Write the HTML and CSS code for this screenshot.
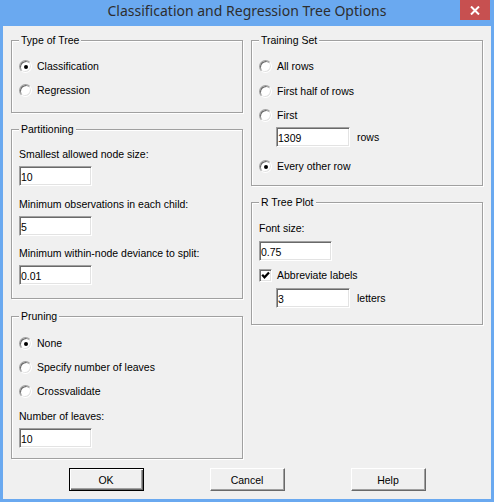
FILE: index.html
```html
<!DOCTYPE html>
<html>
<head>
<meta charset="utf-8">
<link rel="stylesheet" href="styles.css">
</head>
<body>
<div class="window">
  <div class="titlebar">
    <span></span>
    <span class="title">Classification and Regression Tree Options</span>
    <span class="close"><svg width="10" height="9" viewBox="0 0 10 9"><path d="M1 0.5 L9 8.5 M9 0.5 L1 8.5" stroke="#fff" stroke-width="2"/></svg></span>
  </div>
  <div class="client">
    <div class="columns">
      <div class="col">
        <div class="group g-type">
          <div class="legend">Type of Tree</div>
          <div class="row r-first"><span class="radio checked"></span>Classification</div>
          <div class="row r-next"><span class="radio"></span>Regression</div>
        </div>
        <div class="group g-part">
          <div class="legend">Partitioning</div>
          <div class="label l-first">Smallest allowed node size:</div>
          <input class="edit" value="10">
          <div class="label l-next">Minimum observations in each child:</div>
          <input class="edit" value="5">
          <div class="label l-next2">Minimum within-node deviance to split:</div>
          <input class="edit" value="0.01">
        </div>
        <div class="group g-prune">
          <div class="legend">Pruning</div>
          <div class="row r-none"><span class="radio checked"></span>None</div>
          <div class="row r-next"><span class="radio"></span>Specify number of leaves</div>
          <div class="row r-next"><span class="radio"></span>Crossvalidate</div>
          <div class="label l-next">Number of leaves:</div>
          <input class="edit" value="10">
        </div>
      </div>
      <div class="col">
        <div class="group g-train">
          <div class="legend">Training Set</div>
          <div class="row r-first"><span class="radio"></span>All rows</div>
          <div class="row r-half"><span class="radio"></span>First half of rows</div>
          <div class="row r-next"><span class="radio"></span>First</div>
          <div class="editrow"><input class="edit wide" value="1309"><span class="unit">rows</span></div>
          <div class="row r-every"><span class="radio checked"></span>Every other row</div>
        </div>
        <div class="group g-plot">
          <div class="legend">R Tree Plot</div>
          <div class="label l-font">Font size:</div>
          <input class="edit" value="0.75">
          <div class="row r-check"><span class="check"><svg width="9" height="9" viewBox="0 0 9 9"><path d="M1.2 3.8 L3.5 6.3 L8 1.6" fill="none" stroke="#000" stroke-width="2.2"/></svg></span>Abbreviate labels</div>
          <div class="editrow"><input class="edit wide" value="3"><span class="unit">letters</span></div>
        </div>
      </div>
    </div>
    <div class="buttons">
      <button class="btn default">OK</button>
      <button class="btn">Cancel</button>
      <button class="btn">Help</button>
    </div>
  </div>
</div>
</body>
</html>
```

FILE: styles.css
```css
* { box-sizing: border-box; }
html, body { margin: 0; padding: 0; }
body {
  width: 494px;
  height: 502px;
  overflow: hidden;
  font-family: "Liberation Sans", Arial, sans-serif;
  font-size: 10.5px;
  color: #000;
}
.window {
  width: 494px;
  height: 502px;
  background: #6aa9f0;
  padding: 0 3px 3px 3px;
  display: flex;
  flex-direction: column;
}
.titlebar {
  height: 26px;
  margin: 0 -3px;
  display: grid;
  grid-template-columns: 1fr auto 1fr;
  align-items: start;
}
.title {
  font-family: "Noto Sans", "Open Sans", sans-serif;
  font-size: 14px;
  line-height: 20px;
  padding-top: 1px;
  color: #2e2e2e;
  white-space: nowrap;
}
.close {
  justify-self: end;
  margin-right: 4px;
  width: 30px;
  height: 20px;
  background: #c75050;
  display: flex;
  align-items: center;
  justify-content: center;
}
.close svg { display: block; }
.client {
  flex: 1;
  background: #f0f0f0;
  padding: 14px 8px 0 8px;
}
.columns {
  display: flex;
  gap: 8px;
}
.col {
  width: 232px;
  display: flex;
  flex-direction: column;
}
.group {
  border: 1px solid #a0a0a0;
  box-shadow: inset 1px 1px #fff, 1px 1px #fff;
  padding: 0 7px;
}
.legend {
  width: fit-content;
  height: 13px;
  line-height: 13px;
  margin-top: -7px;
  padding: 0 2px;
  background: #f0f0f0;
  white-space: nowrap;
}
.row {
  height: 13px;
  line-height: 13px;
  display: flex;
  align-items: center;
  white-space: nowrap;
}
.label {
  height: 13px;
  line-height: 13px;
  white-space: nowrap;
}
.radio {
  width: 13px;
  height: 13px;
  margin-right: 5px;
  border-radius: 50%;
  border: 1px solid;
  border-color: #a0a0a0 #fff #fff #a0a0a0;
  box-shadow: inset 1px 1px #696969, inset -1px -1px #e3e3e3;
  background: #fff;
  display: flex;
  align-items: center;
  justify-content: center;
  flex: none;
}
.radio.checked::after {
  content: "";
  width: 4px;
  height: 4px;
  border-radius: 50%;
  background: #000;
}
.check {
  width: 13px;
  height: 13px;
  margin-right: 5px;
  border: 1px solid;
  border-color: #a0a0a0 #fff #fff #a0a0a0;
  box-shadow: inset 1px 1px #696969, inset -1px -1px #e3e3e3;
  background: #fff;
  display: flex;
  align-items: center;
  justify-content: center;
  flex: none;
}
.check svg { display: block; }
.edit {
  display: block;
  width: 73px;
  height: 20px;
  margin: 5px 0 0 0;
  padding: 1px 0 0 1px;
  font-family: inherit;
  font-size: 10.5px;
  color: #000;
  background: #fff;
  border: 1px solid;
  border-color: #a0a0a0 #fff #fff #a0a0a0;
  box-shadow: inset 1px 1px #696969, inset -1px -1px #e3e3e3;
  outline: none;
}
.edit.wide { width: 74px; margin: 0; }
.editrow {
  display: flex;
  align-items: center;
  padding-left: 17px;
  margin-top: 5px;
}
.unit { margin-left: 7px; }

/* Type of Tree */
.g-type { padding-bottom: 15px; }
.r-first { margin-top: 13px; }
.r-next { margin-top: 11px; }

/* Partitioning */
.g-part { margin-top: 16px; padding-bottom: 13px; }
.l-first { margin-top: 12px; }
.l-next { margin-top: 12px; }
.l-next2 { margin-top: 11px; }

/* Pruning */
.g-prune { margin-top: 17px; padding-bottom: 10px; }
.r-none { margin-top: 14px; }

/* Training */
.g-train { padding-bottom: 12px; }
.r-half { margin-top: 12px; }
.r-every { margin-top: 13px; }

/* R Tree Plot */
.g-plot { margin-top: 16px; padding-bottom: 16px; }
.l-font { margin-top: 13px; }
.g-plot .edit { margin-top: 6px; }
.g-plot .edit.wide { margin-top: 0; }
.r-check { margin-top: 8px; }
.g-plot .editrow { margin-top: 6px; }

.buttons {
  display: flex;
  justify-content: center;
  gap: 66px;
  margin-top: 9px;
}
.btn {
  width: 75px;
  height: 23px;
  padding: 0;
  font-family: inherit;
  font-size: 10.5px;
  color: #000;
  background: #f0f0f0;
  border: 1px solid;
  border-color: #fff #696969 #696969 #fff;
  box-shadow: inset -1px -1px #a0a0a0, inset 1px 1px #f0f0f0;
  border-radius: 0;
}
.btn.default {
  border: 1px solid #000;
  box-shadow: inset 1px 1px #fff, inset -1px -1px #696969, inset -2px -2px #a0a0a0;
}
```
